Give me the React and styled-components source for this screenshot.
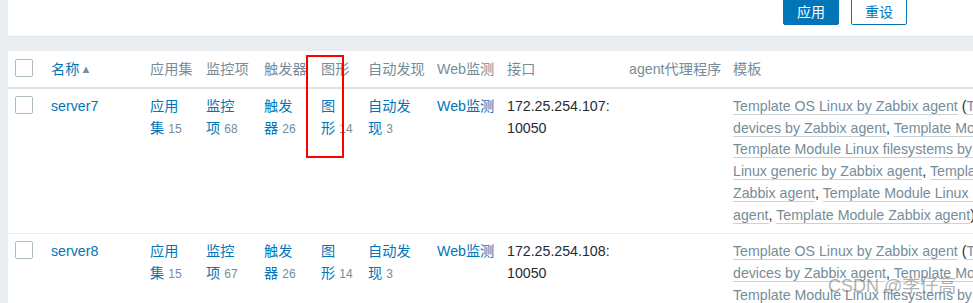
import styled, { createGlobalStyle } from 'styled-components';

const GlobalStyle = createGlobalStyle`
  html, body {
    margin: 0;
    padding: 0;
    background: #ebeef0;
    overflow: hidden;
  }
  body {
    font-family: "Liberation Sans", Arial, "Noto Sans CJK SC", sans-serif;
    font-size: 14.2px;
    color: #1f2c33;
  }
`;

const COLS = '36px 99px 56px 58px 57px 47px 69px 70px 122px 104px 470px';

const Page = styled.div`
  position: relative;
  width: 1210px;
  padding-left: 8px;
`;

const FilterPanel = styled.div`
  height: 37px;
  background: #fff;
  border-bottom: 1px solid #dfe4e7;
  box-sizing: border-box;
  display: flex;
  align-items: flex-end;
  padding: 0 0 11px 775px;
  gap: 12px;
`;

const Button = styled.button`
  width: 56px;
  height: 28px;
  border-radius: 2px;
  border: 1px solid #0275b8;
  background: ${(p) => (p.$primary ? '#0275b8' : '#fff')};
  color: ${(p) => (p.$primary ? '#fff' : '#0275b8')};
  font-family: "Liberation Sans", "Noto Sans CJK SC", sans-serif;
  font-size: 14px;
  padding: 0;
  cursor: pointer;
`;

const TablePanel = styled.div`
  margin-top: 14px;
  background: #fff;
  padding-left: 7px;
  line-height: 21.7px;
`;

const HeadRow = styled.div`
  display: grid;
  grid-template-columns: ${COLS};
  height: 38px;
  box-sizing: border-box;
  padding-top: 8px;
  border-bottom: 2px solid #dfe4e7;
  margin-left: -7px;
  padding-left: 7px;
`;

const Row = styled.div`
  display: grid;
  grid-template-columns: ${COLS};
  align-items: start;
  padding: 7px 0 7px 7px;
  margin-left: -7px;
  border-bottom: 1px solid #ebeef0;
`;

const Th = styled.div`
  color: #768d99;
  white-space: nowrap;
`;

const Cell = styled.div`
  color: #1f2c33;
`;

const CheckBox = styled.span`
  display: block;
  width: 18px;
  height: 18px;
  box-sizing: border-box;
  border: 1px solid #acbbc2;
  border-radius: 2px;
  background: #fff;
`;

const Link = styled.a`
  color: #0275b8;
  text-decoration: none;
  cursor: pointer;
`;

const SortArrow = styled.span`
  font-size: 11px;
  color: #768d99;
  margin-left: 1px;
  vertical-align: 1px;
`;

const Count = styled.span`
  color: #768d99;
  font-size: 12px;
  margin-left: 4px;
`;

const TemplateCell = styled.div`
  width: 458px;
  color: #1f2c33;
`;

const TemplateLink = styled.a`
  color: #768d99;
  text-decoration: none;
  border-bottom: 1px solid #c9d3d8;
`;

const Frame = styled.div`
  position: absolute;
  left: 306px;
  top: 55px;
  width: 38px;
  height: 103px;
  box-sizing: border-box;
  border: 2px solid #ff0000;
  pointer-events: none;
`;

const Watermark = styled.div`
  position: absolute;
  left: 828px;
  top: 271px;
  font-size: 18px;
  color: rgba(100, 100, 100, 0.5);
  white-space: nowrap;
  pointer-events: none;
`;

const headers = ['应用集', '监控项', '触发器', '图形', '自动发现', 'Web监测', '接口', 'agent代理程序', '模板'];

const children = ['block devices', 'CPU', 'filesystems', 'generic', 'memory', 'network interfaces'];

const hosts = [
  { name: 'server7', ip: '172.25.254.107', counts: [15, 68, 26, 14, 3] },
  { name: 'server8', ip: '172.25.254.108', counts: [15, 67, 26, 14, 3] },
];

const splits = [
  ['应用', '集'],
  ['监控', '项'],
  ['触发', '器'],
  ['图', '形'],
  ['自动发', '现'],
];

function Templates() {
  return (
    <TemplateCell>
      <TemplateLink>Template OS Linux by Zabbix agent</TemplateLink> (
      {children.map((c) => (
        <span key={c}>
          <TemplateLink>Template Module Linux {c} by Zabbix agent</TemplateLink>,{' '}
        </span>
      ))}
      <TemplateLink>Template Module Zabbix agent</TemplateLink>)
    </TemplateCell>
  );
}

export default function App() {
  return (
    <Page>
      <GlobalStyle />
      <FilterPanel>
        <Button $primary>应用</Button>
        <Button>重设</Button>
      </FilterPanel>

      <TablePanel>
        <HeadRow>
          <Th><CheckBox /></Th>
          <Th>
            <Link>名称</Link>
            <SortArrow>▲</SortArrow>
          </Th>
          {headers.map((h) => (
            <Th key={h}>{h}</Th>
          ))}
        </HeadRow>

        {hosts.map((h) => (
          <Row key={h.name}>
            <Cell><CheckBox /></Cell>
            <Cell><Link>{h.name}</Link></Cell>
            {splits.map(([a, b], i) => (
              <Cell key={a}>
                <Link>{a}<br />{b}</Link>
                <Count>{h.counts[i]}</Count>
              </Cell>
            ))}
            <Cell><Link>Web监测</Link></Cell>
            <Cell>{h.ip}:<br />10050</Cell>
            <Cell />
            <Templates />
          </Row>
        ))}
      </TablePanel>

      <Frame />
      <Watermark>CSDN @李仔高</Watermark>
    </Page>
  );
}
